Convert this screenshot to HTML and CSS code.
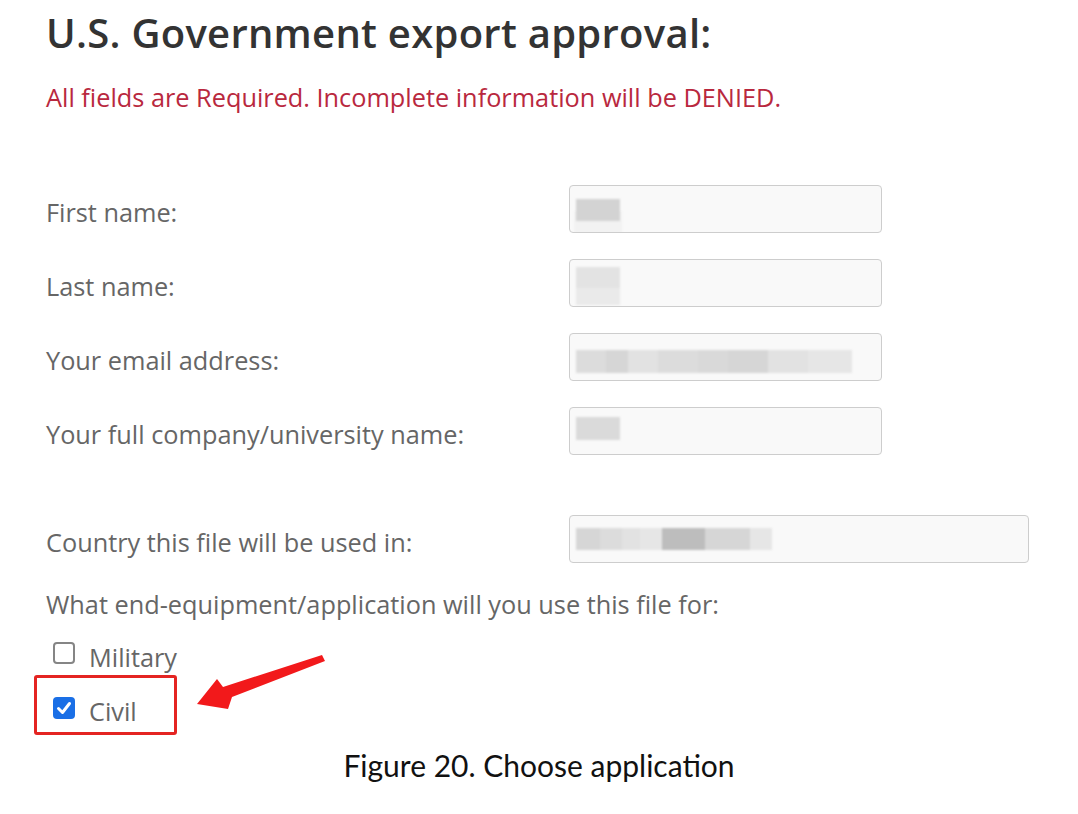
FILE: index.html
```html
<!DOCTYPE html>
<html lang="en">
<head>
<meta charset="utf-8">
<title>U.S. Government export approval</title>
<link rel="stylesheet" href="styles.css">
</head>
<body>
<div class="page">
  <h1 class="title">U.S. Government export approval:</h1>
  <p class="notice">All fields are Required. Incomplete information will be DENIED.</p>

  <div class="form">
    <div class="row">
      <div class="label">First name:</div>
      <div class="field">
        <span class="blob b-first"></span>
      </div>
    </div>
    <div class="row">
      <div class="label">Last name:</div>
      <div class="field">
        <span class="blob b-last"></span>
      </div>
    </div>
    <div class="row">
      <div class="label">Your email address:</div>
      <div class="field">
        <span class="strip s-email">
          <span class="seg g1 w30"></span><span class="seg g2 w22"></span><span class="seg g3 w30"></span><span class="seg g1 w40"></span><span class="seg g4 w30"></span><span class="seg g2 w40"></span><span class="seg g3 w40"></span><span class="seg g5 w44"></span>
        </span>
      </div>
    </div>
    <div class="row">
      <div class="label">Your full company/university name:</div>
      <div class="field">
        <span class="blob b-company"></span>
      </div>
    </div>
    <div class="row row-country">
      <div class="label">Country this file will be used in:</div>
      <div class="field field-wide">
        <span class="strip s-country">
          <span class="seg g2 w24"></span><span class="seg g1 w22"></span><span class="seg g3 w18"></span><span class="seg g5 w22"></span><span class="seg g6 w43"></span><span class="seg g2 w45"></span><span class="seg g5 w22"></span>
        </span>
      </div>
    </div>
  </div>

  <p class="question">What end-equipment/application will you use this file for:</p>

  <div class="choice choice-military">
    <span class="box"></span>
    <span class="choice-text">Military</span>
  </div>
  <div class="choice choice-civil">
    <span class="box box-checked">
      <svg viewBox="0 0 22 22" width="22" height="22" aria-hidden="true"><path d="M5.5 11.5 L9.5 15.5 L16.5 6.5" fill="none" stroke="#fff" stroke-width="3" stroke-linecap="round" stroke-linejoin="round"/></svg>
    </span>
    <span class="choice-text">Civil</span>
  </div>

  <p class="caption">Figure 20. Choose application</p>
</div>

<svg class="arrow" width="1078" height="814" viewBox="0 0 1078 814" aria-hidden="true">
  <polygon points="197,704 217,679 223,687 322,655 325,661 232,697 228,709" fill="#f2191b"/>
</svg>
</body>
</html>
```

FILE: styles.css
```css
html, body {
  margin: 0;
  padding: 0;
  background: #ffffff;
}

body {
  position: relative;
  width: 1078px;
  height: 814px;
  overflow: hidden;
  font-family: "Open Sans", "Noto Sans", sans-serif;
}

.page {
  padding: 6px 0 0 46px;
}

.title {
  margin: 0;
  font-size: 40px;
  line-height: 54px;
  font-weight: 600;
  color: #333333;
  letter-spacing: 0.28px;
}

.notice {
  margin: 20px 0 0;
  font-size: 25.3px;
  line-height: 34px;
  color: #b9283e;
}

.form {
  margin-top: 71px;
  display: flex;
  flex-direction: column;
  gap: 26px;
}

.row {
  display: grid;
  grid-template-columns: 523px auto;
  align-items: start;
}

.row-country {
  margin-top: 34px;
}

.label {
  padding-top: 6px;
  font-size: 25.3px;
  line-height: 42px;
  color: #666666;
}

.field {
  box-sizing: border-box;
  width: 313px;
  height: 48px;
  border: 1px solid #cdcdcd;
  border-radius: 4px;
  background: #f9f9f9;
  display: flex;
  align-items: center;
  padding-left: 6px;
  overflow: hidden;
}

.field-wide {
  width: 460px;
}

.blob {
  display: block;
  width: 44px;
  filter: blur(1px);
}

.b-first {
  height: 22px;
  background: #d3d3d3;
  margin-top: 2px;
  box-shadow: 0 14px 0 2px #f2f2f2;
}

.b-last {
  height: 38px;
  background: linear-gradient(#e3e3e3 0 55%, #eaeaea 55% 100%);
  margin-top: 6px;
}

.b-company {
  height: 23px;
  background: #dadada;
  margin-top: -5px;
}

.strip {
  display: flex;
  height: 23px;
  filter: blur(1px);
}

.s-email {
  margin-top: 9px;
}

.s-country {
  height: 22px;
  margin-top: 0;
}

.seg {
  display: block;
  height: 100%;
}

.g1 { background: #dcdcdc; }
.g2 { background: #d6d6d6; }
.g3 { background: #e2e2e2; }
.g4 { background: #d9d9d9; }
.g5 { background: #e6e6e6; }
.g6 { background: #bdbdbd; }

.w18 { width: 18px; }
.w22 { width: 22px; }
.w24 { width: 24px; }
.w30 { width: 30px; }
.w40 { width: 40px; }
.w43 { width: 43px; }
.w44 { width: 44px; }
.w45 { width: 45px; }

.question {
  margin: 24px 0 0;
  font-size: 25.3px;
  line-height: 34px;
  color: #666666;
}

.choice {
  display: flex;
  align-items: center;
  font-size: 25.3px;
  line-height: 34px;
  color: #666666;
}

.choice-military {
  margin-top: 19px;
  padding-left: 7px;
}

.choice-civil {
  box-sizing: border-box;
  width: 143px;
  height: 60px;
  margin: 1px 0 0 -12px;
  padding: 12px 0 0 16px;
  border: 3px solid #e42422;
  border-radius: 3px;
}

.box {
  box-sizing: border-box;
  width: 22px;
  height: 22px;
  border: 2px solid #858585;
  border-radius: 4px;
  background: #ffffff;
  margin-right: 14px;
  margin-top: -8px;
  flex: none;
}

.box-checked {
  border: none;
  background: #1a6fe6;
  margin-top: -6px;
}

.box-checked svg {
  display: block;
}

.choice-text {
  display: block;
}

.caption {
  margin: 12px 0 0 -46px;
  text-align: center;
  font-family: "Lato", "Open Sans", sans-serif;
  font-size: 30px;
  line-height: 36px;
  color: #111111;
}

.arrow {
  position: absolute;
  left: 0;
  top: 0;
  pointer-events: none;
}
```
